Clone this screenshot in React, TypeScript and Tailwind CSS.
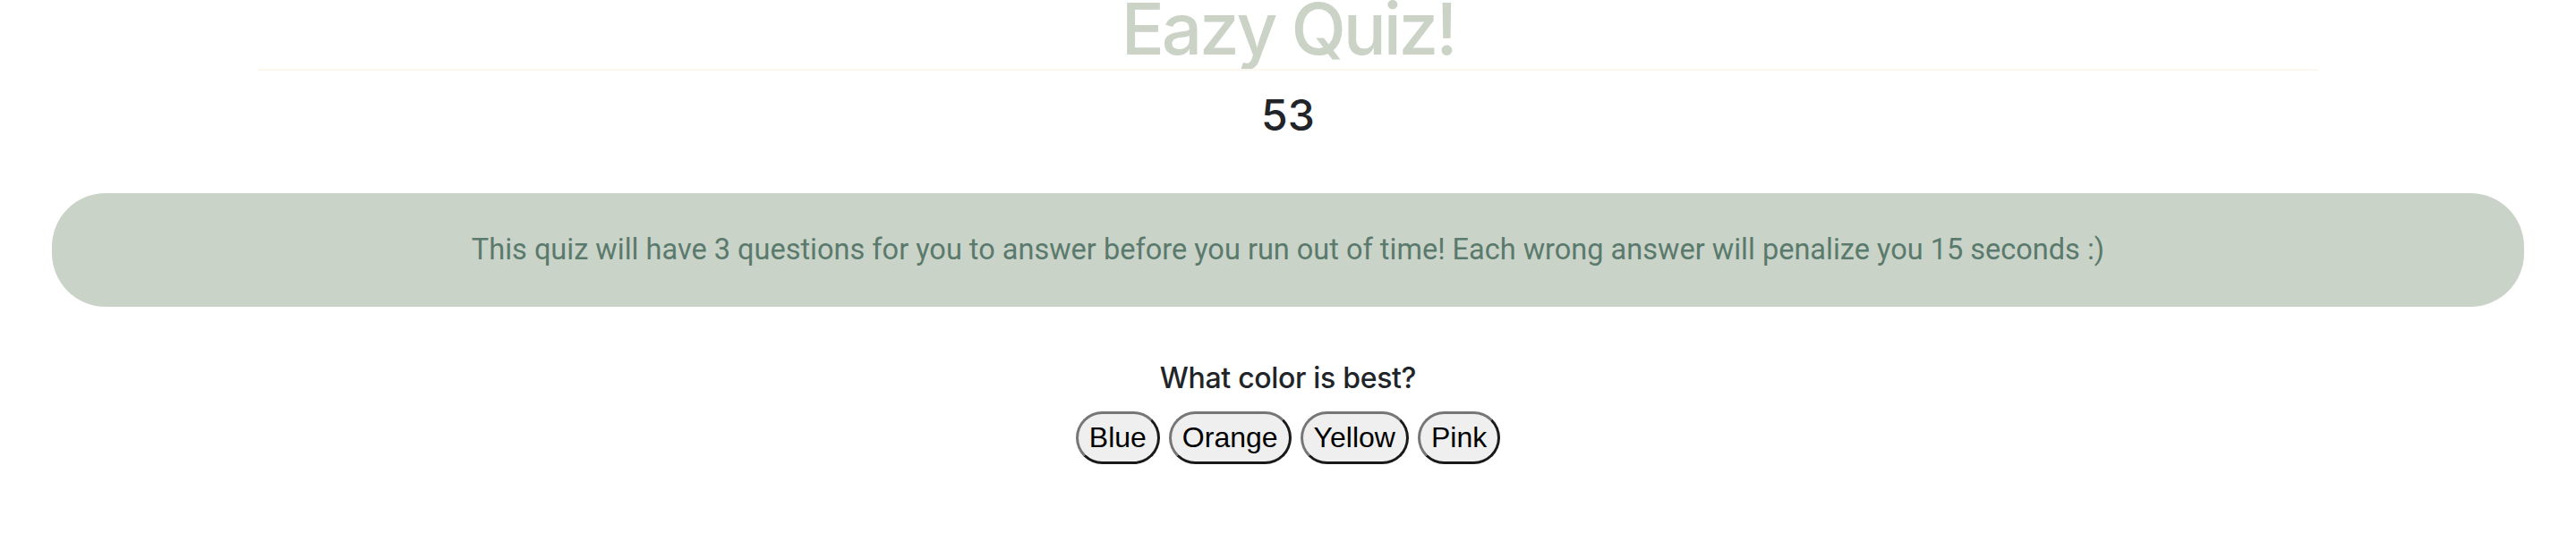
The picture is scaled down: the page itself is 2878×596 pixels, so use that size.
import React from "react";

const options = ["Blue", "Orange", "Yellow", "Pink"];

const App: React.FC = () => {
  return (
    <div className="min-h-screen w-full bg-white flex flex-col items-center font-['Inter',sans-serif]">
      <h1 className="mt-[-8px] text-[80px] leading-none font-medium tracking-[-0.04em] text-[#cbd3c7]">
        Eazy Quiz!
      </h1>
      <hr className="mt-[5px] w-4/5 border-0 border-t-2 border-[#fff7ee]" />
      <h2 className="mt-[26px] text-[48px] leading-none font-medium text-[#212529]">53</h2>

      <div className="mt-[63px] flex h-[127px] w-[calc(100%-116px)] items-center justify-center rounded-[60px] bg-[#cad3c7]">
        <p className="font-['Roboto',sans-serif] text-[32.5px] text-[#5a7a6d]">
          This quiz will have 3 questions for you to answer before you run out of time! Each wrong
          answer will penalize you 15 seconds :)
        </p>
      </div>

      <p className="mt-[62px] text-[32px] leading-[36px] font-medium tracking-[-0.01em] text-[#212529]">
        What color is best?
      </p>
      <div className="mt-[19px] flex gap-[10px]">
        {options.map((opt) => (
          <button
            key={opt}
            className="rounded-full border-[3px] border-t-[#767676] border-l-[#767676] border-r-[#1a1a1a] border-b-[#1a1a1a] bg-[#efefef] px-[12px] py-[8px] font-['Liberation_Sans',sans-serif] text-[32px] leading-[37px] text-black"
          >
            {opt}
          </button>
        ))}
      </div>
    </div>
  );
};

export default App;
